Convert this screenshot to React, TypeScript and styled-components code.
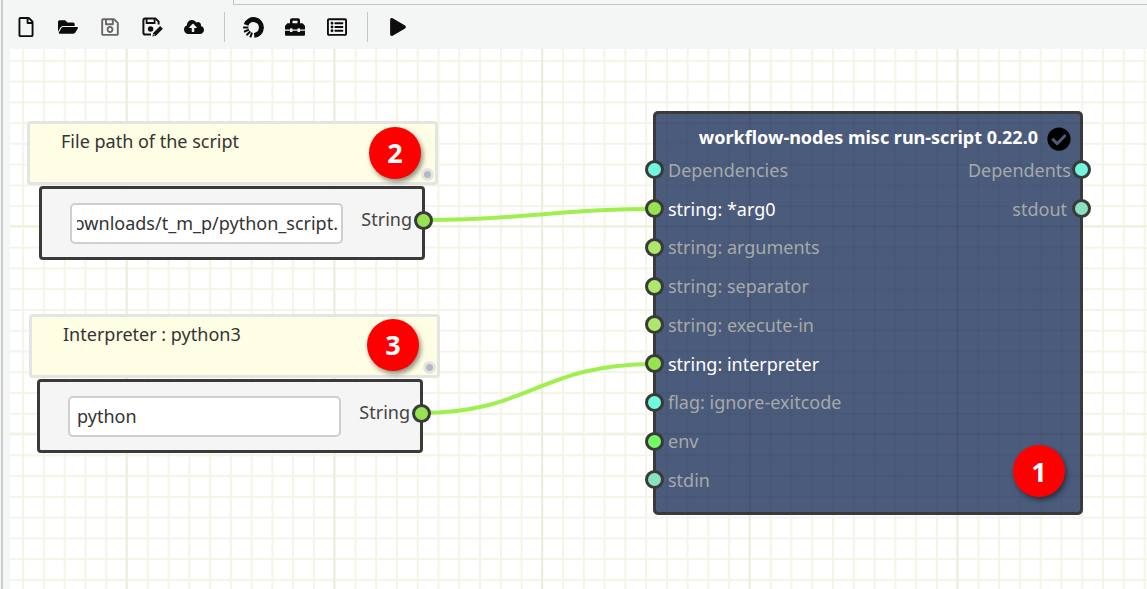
import React from "react";
import styled, { createGlobalStyle, css } from "styled-components";
import {
  FaCheckCircle,
  FaCloudUploadAlt,
  FaFolderOpen,
  FaPlay,
  FaRegFile,
  FaRegListAlt,
  FaRegSave,
  FaToolbox,
} from "react-icons/fa";

const GlobalStyle = createGlobalStyle`
  html, body {
    margin: 0;
    height: 589px;
    overflow: hidden;
    background: #f4f6f5;
    font-family: "Noto Sans", sans-serif;
  }
`;

const gridLines = (minor: string, majorX: string, majorY: string, ox: number, oy: number) => css`
  background-image:
    linear-gradient(to right, ${majorX} 1.5px, transparent 1.5px),
    linear-gradient(to bottom, ${majorY} 2px, transparent 2px),
    linear-gradient(to right, ${minor} 1.5px, transparent 1.5px),
    linear-gradient(to bottom, ${minor} 1.5px, transparent 1.5px);
  background-size: 207.7px 207.7px, 207.7px 207.7px, 20.77px 20.77px, 20.77px 20.77px;
  background-position: ${ox + 115.6}px 0, 0 ${oy + 176}px, ${ox + 12.2}px 0, 0 ${oy + 10.8}px;
`;

const Shell = styled.div`
  height: 589px;
  display: flex;
  flex-direction: column;
  border-left: 2px solid #c9cccb;
  margin-left: 1px;
  box-sizing: border-box;
`;

const TabEdge = styled.div`
  height: 5px;
  flex: none;
  margin-left: 230px;
  box-sizing: border-box;
  border-left: 1px solid #c4c6c6;
  border-bottom: 1px solid #c4c6c6;
`;

const Toolbar = styled.div`
  height: 44px;
  flex: none;
  display: flex;
  align-items: center;
  padding-left: 2px;
`;

const ToolButton = styled.div<{ $muted?: boolean }>`
  width: 42px;
  height: 44px;
  display: flex;
  align-items: center;
  justify-content: center;
  color: ${(p) => (p.$muted ? "#666" : "#0c0c0c")};
  font-size: 20px;
`;

const Divider = styled.div<{ $gap: number }>`
  width: 1px;
  height: 30px;
  background: #c5c7c7;
  margin: 0 ${(p) => p.$gap}px 0 9px;
`;

const Canvas = styled.div`
  flex: 1;
  position: relative;
  margin-left: 7px;
  background-color: #fff;
  ${gridLines("#f3f5e6", "#eceedd", "#f0f2e1", 0, 0)}
`;

const Wires = styled.svg`
  position: absolute;
  left: 0;
  top: 0;
  width: 1137px;
  height: 540px;
`;

const Note = styled.div<{ $x: number; $y: number }>`
  position: absolute;
  left: ${(p) => p.$x}px;
  top: ${(p) => p.$y}px;
  width: 411px;
  height: 64px;
  box-sizing: border-box;
  background: #fefee4;
  border: 3px solid #e4e5e2;
  border-radius: 4px;
  padding: 5px 0 0 31px;
  font-size: 18px;
  line-height: 24px;
  color: #333;
`;

const ResizeHandle = styled.span`
  position: absolute;
  right: 1px;
  bottom: 1px;
  width: 7px;
  height: 7px;
  border-radius: 50%;
  background: #b8b8c2;
  border: 3px solid #e4e4e4;
`;

const Badge = styled.div<{ $right: number; $bottom: number }>`
  position: absolute;
  right: ${(p) => p.$right}px;
  bottom: ${(p) => p.$bottom}px;
  width: 52px;
  height: 52px;
  border-radius: 50%;
  background: #fe0000;
  color: #fff;
  font-size: 27px;
  font-weight: 700;
  display: flex;
  align-items: center;
  justify-content: center;
  box-shadow: 2px 3px 5px rgba(0, 0, 0, 0.45);
`;

const ValueNode = styled.div<{ $x: number; $y: number }>`
  position: absolute;
  left: ${(p) => p.$x}px;
  top: ${(p) => p.$y}px;
  width: 386px;
  height: 74px;
  box-sizing: border-box;
  background: #f5f5f5;
  border: 3px solid #3a3a3a;
  border-radius: 4px;
  display: flex;
  align-items: center;
  padding: 0 10px 0 28px;
`;

const ValueBox = styled.div`
  width: 273px;
  height: 41px;
  box-sizing: border-box;
  background: #fff;
  border: 2px solid #cfcfcf;
  border-radius: 5px;
  padding: 0 3px 0 5px;
  display: flex;
`;

const ValueText = styled.div<{ $clip?: boolean }>`
  flex: 1;
  overflow: hidden;
  white-space: nowrap;
  display: flex;
  align-items: center;
  justify-content: ${(p) => (p.$clip ? "flex-end" : "flex-start")};
  padding-left: ${(p) => (p.$clip ? 0 : 2)}px;
  font-size: 18px;
  color: #333;
`;

const TypeLabel = styled.div`
  margin-left: auto;
  font-size: 18px;
  line-height: 24px;
  color: #444;
  margin-top: -8px;
`;

const Port = styled.span<{ $color: string; $side: "left" | "right"; $offset?: number }>`
  position: absolute;
  top: 50%;
  ${(p) => p.$side}: ${(p) => p.$offset ?? -9}px;
  width: 19px;
  height: 19px;
  box-sizing: border-box;
  margin-top: -9.5px;
  border-radius: 50%;
  background: ${(p) => p.$color};
  border: 3px solid #3a3a3a;
`;

const ValuePort = styled(Port)`
  margin-top: -12.5px;
`;

const ScriptNode = styled.div`
  position: absolute;
  left: 643px;
  top: 62px;
  width: 430px;
  height: 404px;
  box-sizing: border-box;
  border: 3px solid #3a3a3a;
  border-radius: 5px;
  background-color: #4b5b7b;
  ${gridLines("rgba(0,0,0,.03)", "rgba(0,0,0,.05)", "rgba(0,0,0,.04)", -646, -65)}
`;

const ScriptHeader = styled.div`
  height: 36.6px;
  box-sizing: border-box;
  padding: 9px 9px 0 0;
  display: flex;
  align-items: center;
  justify-content: flex-end;
  gap: 9px;
  color: #fff;
  font-size: 18px;
  font-weight: 700;
`;

const HeaderTitle = styled.span`
  white-space: nowrap;
`;

const CheckIcon = styled(FaCheckCircle)`
  color: #000;
  font-size: 24px;
  margin-top: 4px;
`;

const PortColumns = styled.div`
  display: flex;
  justify-content: space-between;
`;

const PortColumn = styled.div`
  flex: 1;
`;

const PortRow = styled.div<{ $right?: boolean; $active?: boolean; $inset?: number }>`
  position: relative;
  height: 38.75px;
  display: flex;
  align-items: center;
  justify-content: ${(p) => (p.$right ? "flex-end" : "flex-start")};
  padding: ${(p) =>
    p.$right ? `0 ${p.$inset ?? 9}px 0 0` : "0 0 0 12px"};
  font-size: 18px;
  color: ${(p) => (p.$active ? "#fff" : "#a7a9a9")};
  white-space: nowrap;
`;

const inputs = [
  { label: "Dependencies", color: "#72f6e0" },
  { label: "string: *arg0", color: "#98e252", active: true },
  { label: "string: arguments", color: "#aee86a" },
  { label: "string: separator", color: "#aee86a" },
  { label: "string: execute-in", color: "#aee86a" },
  { label: "string: interpreter", color: "#98e252", active: true },
  { label: "flag: ignore-exitcode", color: "#6ffbdc" },
  { label: "env", color: "#74fa66" },
  { label: "stdin", color: "#88e2c0" },
];

const outputs = [
  { label: "Dependents", color: "#72f6e0", inset: 9 },
  { label: "stdout", color: "#88e2c0", inset: 13 },
];

const SaveEditIcon = () => (
  <svg width="21" height="20" viewBox="0 0 21 20" fill="none">
    <path
      d="M9 17.6H3.2a1.8 1.8 0 0 1-1.8-1.8V3.2a1.8 1.8 0 0 1 1.8-1.8h10.2l3.2 3.2v3"
      stroke="#111"
      strokeWidth="2"
    />
    <path d="M4.6 2v4h8V2" stroke="#111" strokeWidth="1.8" />
    <circle cx="8.6" cy="12" r="2.7" fill="#111" />
    <path d="M10.5 19.4l.6-3.4 7-7 2.8 2.8-7 7z" fill="#111" />
    <path d="M11.4 18.6l.3-1.8 1.5 1.5z" fill="#f4f6f5" />
  </svg>
);

const LoaderIcon = () => (
  <svg width="21" height="21" viewBox="0 0 21 21" fill="none" stroke="#0c0c0c">
    <path d="M3.07 7.8A7.9 7.9 0 1 1 11.19 18.37" strokeWidth="5" />
    <path
      d="M9 15.6L7.29 20.39M7.3 14.4L3.54 18.23M6 12.6L1 14.73M5.4 10.4L.1 10.4"
      strokeWidth="2"
    />
  </svg>
);

const PlayIcon = styled(FaPlay)`
  font-size: 18px;
`;

export default function App() {
  return (
    <>
      <GlobalStyle />
      <Shell>
        <TabEdge />
        <Toolbar>
          <ToolButton>
            <FaRegFile />
          </ToolButton>
          <ToolButton>
            <FaFolderOpen />
          </ToolButton>
          <ToolButton $muted>
            <FaRegSave />
          </ToolButton>
          <ToolButton>
            <SaveEditIcon />
          </ToolButton>
          <ToolButton>
            <FaCloudUploadAlt />
          </ToolButton>
          <Divider $gap={7} />
          <ToolButton>
            <LoaderIcon />
          </ToolButton>
          <ToolButton>
            <FaToolbox />
          </ToolButton>
          <ToolButton>
            <FaRegListAlt />
          </ToolButton>
          <Divider $gap={9} />
          <ToolButton>
            <PlayIcon />
          </ToolButton>
        </Toolbar>
        <Canvas>
          <Wires viewBox="0 0 1137 540" fill="none">
            <path d="M413 171C520 171 540 160 644 160" stroke="#9ff04f" strokeWidth="4" />
            <path d="M411 364C520 364 530 315 644 315" stroke="#9ff04f" strokeWidth="4" />
          </Wires>

          <Note $x={17} $y={72}>
            File path of the script
            <Badge $right={14} $bottom={3}>2</Badge>
            <ResizeHandle />
          </Note>
          <ValueNode $x={29} $y={137}>
            <ValueBox>
              <ValueText $clip>Downloads/t_m_p/python_script.</ValueText>
            </ValueBox>
            <TypeLabel>String</TypeLabel>
            <ValuePort $side="right" $color="#98e252" $offset={-11} />
          </ValueNode>

          <Note $x={19} $y={265}>
            Interpreter : python3
            <Badge $right={18} $bottom={4}>3</Badge>
            <ResizeHandle />
          </Note>
          <ValueNode $x={27} $y={330}>
            <ValueBox>
              <ValueText>python</ValueText>
            </ValueBox>
            <TypeLabel>String</TypeLabel>
            <ValuePort $side="right" $color="#98e252" $offset={-11} />
          </ValueNode>

          <ScriptNode>
            <ScriptHeader>
              <HeaderTitle>workflow-nodes misc run-script 0.22.0</HeaderTitle>
              <CheckIcon />
            </ScriptHeader>
            <PortColumns>
              <PortColumn>
                {inputs.map((item) => (
                  <PortRow key={item.label} $active={item.active}>
                    <Port $side="left" $color={item.color} $offset={-11} />
                    {item.label}
                  </PortRow>
                ))}
              </PortColumn>
              <PortColumn>
                {outputs.map((item) => (
                  <PortRow key={item.label} $right $inset={item.inset}>
                    {item.label}
                    <Port $side="right" $color={item.color} $offset={-11} />
                  </PortRow>
                ))}
              </PortColumn>
            </PortColumns>
            <Badge $right={15} $bottom={15}>1</Badge>
          </ScriptNode>
        </Canvas>
      </Shell>
    </>
  );
}
